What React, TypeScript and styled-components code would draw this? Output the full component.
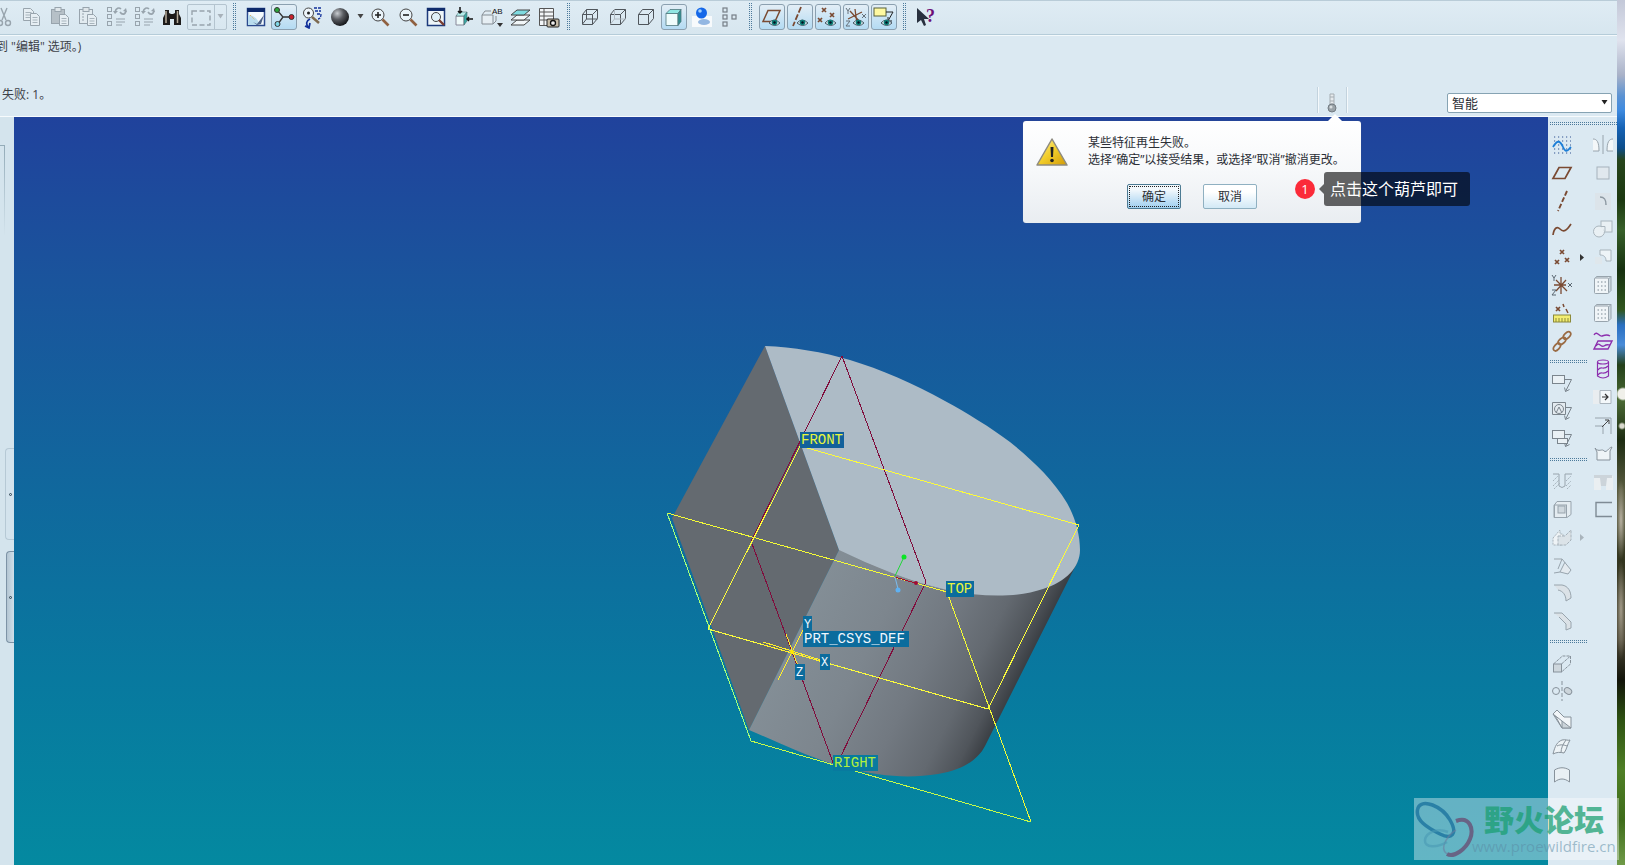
import React from "react";
import styled, { createGlobalStyle } from "styled-components";

const GlobalStyle = createGlobalStyle`
  * { box-sizing: border-box; }
  body {
    margin: 0;
    background: #dbe9f2;
    color: #2b2f36;
    font: 12px/17px "Open Sans", "Noto Sans CJK SC", sans-serif;
  }
  button, select { font: inherit; color: inherit; }
`;

/* ---------- frame ---------- */

const Desktop = styled.div`
  position: relative;
  display: flex;
  min-height: 100vh;
  overflow: hidden;
`;

const AppWindow = styled.div`
  flex: 1;
  min-width: 0;
  display: flex;
  flex-direction: column;
  background: #dbe9f2;
`;

const Wallpaper = styled.div`
  width: 8px;
  background:
    radial-gradient(circle at 6px 394px, #f0f0ea 0 5px, transparent 7px),
    radial-gradient(circle at 5px 426px, #d8d8cc 0 2px, transparent 4px),
    radial-gradient(ellipse 5px 40px at 4px 520px, #b9b2a2, transparent),
    radial-gradient(ellipse 5px 50px at 4px 610px, #a49c8a, transparent),
    linear-gradient(#c3c8d8 0, #e0e3ee 40px, #a9b2c8 75px, #5b92d2 96px, #3f8be0 110px,
      #1662b4 128px, #0d4d8a 148px, #27451c 160px, #1c3811 200px, #38602a 230px, #16300f 270px,
      #31561f 310px, #2a6fc0 325px, #4a8cd8 345px, #24401a 365px, #4b6a35 400px, #1d2c12 440px,
      #5a5c40 490px, #33351f 560px, #4a4534 640px, #12140a 680px, #2e5212 720px, #4f7f26 770px,
      #3e6c1a 820px, #6f9a48 865px);
`;

const Toolbar = styled.header`
  display: flex;
  align-items: center;
  height: 35px;
  padding-bottom: 2px;
  overflow: hidden;
  border-top: 1px solid #b9ccd8;
  border-bottom: 1px solid #b5ccd9;
  background: linear-gradient(#dfecf4, #d7e6ef);
`;

const ToolGroup = styled.div<{ $clipped?: boolean }>`
  display: flex;
  align-items: center;
  flex: none;
  margin-left: ${(p) => (p.$clipped ? "-10px" : "0")};
`;

const Grip = styled.span<{ $vertical?: boolean; $length: number }>`
  flex: none;
  width: ${(p) => (p.$vertical ? "14px" : `${p.$length}px`)};
  height: ${(p) => (p.$vertical ? `${p.$length}px` : "14px")};
  padding: ${(p) => (p.$vertical ? "0 6px 0 4px" : "5px 0 5px 1px")};
  background-image: conic-gradient(#4c7a9b 25%, transparent 0);
  background-size: 2px 2px;
  background-clip: content-box;
  background-origin: content-box;
`;

const ToolButton = styled.button<{ $on?: boolean }>`
  display: grid;
  place-items: center;
  flex: none;
  width: 26px;
  height: 26px;
  margin: 1px;
  padding: 0;
  border: 1px solid ${(p) => (p.$on ? "#8ba0b0" : "transparent")};
  border-radius: 3px;
  background: ${(p) => (p.$on ? "linear-gradient(#e3eef6, #b4dbf3)" : "none")};
`;

const ArrowButton = styled.button`
  display: grid;
  place-items: center;
  width: 12px;
  height: 26px;
  padding: 0;
  border: 0;
  background: none;
`;

const SplitBox = styled.div`
  display: flex;
  width: 40px;
  height: 26px;
  margin: 0 1px;
  border: 1px solid #b4c4cf;
  border-radius: 2px;

  > button:first-child { width: 26px; height: 24px; margin: 0; }
  > button:last-child { height: 24px; border-left: 1px solid #b4c4cf; }
`;

const MessageBar = styled.section`
  display: flex;
  justify-content: space-between;
  height: 82px;
  border-top: 1px solid #f3f9fc;
  border-bottom: 1px solid #f7fbfd;
`;

const Messages = styled.div`
  display: flex;
  flex-direction: column;
  gap: 31px;
  padding: 2px 0 0 2px;
  white-space: nowrap;
  color: #3d4148;

  p { margin: 0; }
  p:first-child { margin-left: -6px; }
`;

const StatusTools = styled.div`
  display: flex;
  align-items: flex-end;
  gap: 100px;
  padding: 0 5px 3px 0;
`;

const StatusSlot = styled.div`
  position: relative;
  width: 30px;
  height: 26px;
  border-left: 1px solid #c3d3de;
  border-right: 1px solid #c3d3de;
  box-shadow: inset 1px 0 #f4f9fc, 1px 0 #f4f9fc;
`;

const StatusButton = styled.button`
  display: flex;
  align-items: flex-end;
  justify-content: center;
  width: 28px;
  height: 26px;
  padding: 0;
  border: 0;
  background: none;
`;

const FilterBox = styled.div`
  position: relative;
  width: 165px;
  height: 20px;

  select {
    width: 100%;
    height: 20px;
    padding: 0 4px;
    appearance: none;
    border: 1px solid #86a3b3;
    border-radius: 2px;
    background: #fff;
    font-size: 13px;
    line-height: 18px;
  }
  svg {
    position: absolute;
    right: 4px;
    top: 7px;
  }
`;

/* ---------- notification ---------- */

const Balloon = styled.div`
  position: absolute;
  z-index: 2;
  top: 34px;
  right: -15px;
  width: 338px;
  height: 102px;
  display: grid;
  grid-template-columns: 65px 1fr;
  align-content: start;
  padding-top: 13px;
  border-radius: 3px;
  background: linear-gradient(#fff, #f6f8fa 50%, #e9edf1);
  box-shadow: 0 0 1px #5b6b88;

  &::before {
    content: "";
    position: absolute;
    top: -7px;
    right: 18px;
    border: 8px solid transparent;
    border-top: 0;
    border-bottom-color: #fff;
  }
  > svg { margin: 3px 0 0 12px; }
  p { margin: 0; white-space: nowrap; }
`;

const BalloonActions = styled.div`
  grid-column: 1 / -1;
  display: flex;
  gap: 22px;
  padding: 16px 0 0 104px;
`;

const BalloonButton = styled.button<{ $primary?: boolean }>`
  width: 54px;
  height: 25px;
  padding: 0;
  border: 1px solid ${(p) => (p.$primary ? "#4d7b93" : "#8fb0c1")};
  border-radius: 2px;
  background: ${(p) => (p.$primary ? "linear-gradient(#f2f8fc 20%, #9fcff0)" : "linear-gradient(#fff 30%, #d2e9f6)")};
  outline: ${(p) => (p.$primary ? "1px dotted #222" : "none")};
  outline-offset: -3px;
`;

const Annotation = styled.div`
  position: absolute;
  z-index: 3;
  left: 272px;
  top: 51px;
  display: flex;
  align-items: center;
  gap: 4px;
  white-space: nowrap;
`;

const Step = styled.span`
  width: 20px;
  height: 20px;
  border-radius: 50%;
  background: #fb2b39;
  color: #fff;
  text-align: center;
  font-size: 13px;
  line-height: 20px;
`;

const Hint = styled.span`
  display: flex;
  align-items: center;
  color: #fff;
  font-size: 16px;
  line-height: 24px;

  &::before {
    content: "";
    border: 5px solid transparent;
    border-left: 0;
    border-right-color: rgba(0, 0, 0, 0.6);
  }
  b {
    width: 146px;
    padding: 5px 6px;
    border-radius: 3px;
    background: rgba(0, 0, 0, 0.6);
    font-weight: 400;
  }
`;

/* ---------- work area ---------- */

const WorkArea = styled.main`
  flex: 1;
  display: flex;
  min-height: 0;
`;

const Rail = styled.aside`
  width: 14px;
  flex: none;
  padding-top: 28px;
  display: flex;
  flex-direction: column;
  align-items: flex-end;
  background: #d4e4ed;
`;

const RailEdge = styled.span`
  align-self: flex-start;
  width: 5px;
  height: 303px;
  border-top: 1px solid #93abb8;
  border-right: 1px solid;
  border-image: linear-gradient(#93abb8, transparent 30%) 1;
`;

const RailTab = styled.button<{ $front?: boolean }>`
  width: ${(p) => (p.$front ? "8px" : "9px")};
  height: 92px;
  margin-bottom: 11px;
  padding: 0;
  display: grid;
  place-items: center;
  border: ${(p) => (p.$front ? "1px solid #7d93a6" : "1px solid #b6c9d5")};
  border-right: 0;
  border-radius: 4px 0 0 4px;
  background: ${(p) => (p.$front ? "linear-gradient(90deg, #b3c5d2, #cfdfea)" : "#d3e3ed")};

  i {
    width: 3px;
    height: 3px;
    border: 1px solid #2c4250;
    border-radius: 50%;
  }
`;

const Viewport = styled.div`
  flex: 1;
  min-width: 0;
  background: linear-gradient(#20429c 0%, #1a549c 22%, #10689d 50%, #08799f 75%, #0489a0 100%);

  svg { display: block; width: 100%; height: 748px; }
`;

const Palette = styled.aside`
  flex: none;
  width: 69px;
  display: flex;
  flex-wrap: wrap;
  align-content: flex-start;
  background: #dbe9f2;
`;

const PaletteColumn = styled.div<{ $width: number }>`
  width: ${(p) => p.$width}px;
  display: flex;
  flex-direction: column;
`;

const PaletteRow = styled.div`
  display: flex;
  align-items: center;
  height: 28px;
`;

/* ---------- forum watermark ---------- */

const Watermark = styled.div`
  position: absolute;
  z-index: 4;
  right: 6px;
  bottom: 5px;
  display: flex;
  width: 205px;
  height: 62px;
  background: rgba(255, 255, 255, 0.38);

  div { padding-top: 2px; margin-left: -2px; white-space: nowrap; }
  strong {
    display: block;
    padding-left: 12px;
    color: rgba(24, 158, 112, 0.72);
    font: 900 30px/36px "Noto Sans CJK SC", sans-serif;
  }
  small {
    display: block;
    color: rgba(90, 140, 165, 0.55);
    font: 15px/20px "Open Sans", sans-serif;
  }
`;

/* ---------- icons ---------- */

const G = "#98a4ad";
const D = "#50565c";
const B = "#7a4a32";
const P = "#8c2fae";

const eye = (
  <g>
    <path d="M9 18q5-6 11 0q-5 5-11 0z" fill="#dfeaf0" stroke="#4a5a66" />
    <circle cx="14.500" cy="17.500" r="2.800" fill="#0f7f78" />
    <circle cx="14.500" cy="17.500" r="1.200" fill="#012" />
  </g>
);
const page = (x: number, y: number, w: number, h: number) => (
  <g>
    <path d={`M${x} ${y}h${w - 3}l3 3v${h - 3}h-${w}z`} fill="#e6eef3" stroke={G} />
    <path d={`M${x + 2} ${y + 4}h${w - 4}m0 2.500h-${w - 4}m0 2.500h${w - 4}`} stroke={G} strokeWidth=".8" />
  </g>
);
const clipboard = (
  <g>
    <rect x="3.500" y="4.500" width="13" height="14" fill="#b6c0c7" stroke={G} />
    <rect x="7" y="2.500" width="6" height="4" fill="#dfe6ea" stroke={G} />
  </g>
);
const lens = (
  <g>
    <circle cx="10" cy="10" r="6" fill="#eaf4fa" stroke="#444" />
    <path d="M14.500 14.500l6 6" stroke="#8f6040" strokeWidth="2.600" />
  </g>
);
const tree = (
  <g stroke={G}>
    <rect x="3.500" y="2.500" width="4" height="4" />
    <rect x="3.500" y="9.500" width="4" height="4" />
    <rect x="3.500" y="16.500" width="4" height="4" />
    <path d="M12 14h9m0 3h-9m0 3h6" />
    <path d="M11 7c1-4 4-5 6-3m5 2c-1 4-4 4-6 1" strokeWidth="1.600" />
    <path d="M9 6l2 3 3-3zM19 6l3-3 1 4z" fill={G} stroke="none" />
  </g>
);
const boxEdges = (
  <path d="M4.500 9.500h10v10h-10zM4.500 9.500l4-5h11v9l-5 6M14.500 9.500l5-5" />
);
const solidBox = (
  <g>
    <path d="M6.500 3.500h13.500v14l-3 3" fill="#cdd9e1" stroke={G} />
    <path d="M3.500 6.500l2-3h14.500l-3 3z" fill="#dfe8ee" stroke={G} />
    <rect x="3.500" y="5" width="14" height="15.500" rx="1" fill="#f0f5f8" stroke={G} />
    <path d="M6.500 9h9m-9 4h9m-9 4h9" stroke="#a3aeb6" strokeWidth="1.500" strokeDasharray="1.500 2" />
  </g>
);
const cross = (x: number, y: number) => <path d={`M${x - 2} ${y - 2}l4 4m0-4l-4 4`} strokeWidth="1.700" />;
const callout = (x: number, y: number) => (
  <g stroke="#7b858d">
    <rect x={x} y={y} width="12" height="8" fill="#eaf1f5" />
    <path d={`M${x + 12} ${y + 4}h7l-6 12m-1-4l1 4 4-2`} />
  </g>
);

const icons: Record<string, React.ReactNode> = {
  cut: <g stroke={G} strokeWidth="1.400"><path d="M15 3l-5 12M9 3l5 12" /><circle cx="8" cy="18" r="2.500" /><circle cx="16" cy="18" r="2.500" /></g>,
  copy: <g>{page(3.5, 3.5, 10, 12)}{page(10.5, 8.5, 9, 12)}</g>,
  paste: <g>{clipboard}{page(11.5, 9.5, 9, 11)}</g>,
  pasteSpecial: <g><rect x="3.500" y="4.500" width="13" height="14" fill="#e2ebf0" stroke={G} /><rect x="7" y="2.500" width="6" height="4" fill="#dfe6ea" stroke={G} /><path d="M6 9h2m-2 3h2m-2 3h2" stroke={G} />{page(11.5, 9.5, 9, 11)}</g>,
  regen: tree,
  find: <g fill="#1d1b1a"><path d="M5 5h4v3l2 1h2l2-1v-3h4v4l2 4v7h-7v-6h-4v6h-7v-7l2-4z" /><path d="M6 6v12M17.500 6v12" stroke="#b8ad9c" strokeWidth="1.500" /></g>,
  area: <rect x="3" y="5" width="18" height="14" stroke={G} strokeWidth="1.400" strokeDasharray="5 2.500" />,
  repaint: <g><rect x="3.500" y="3.500" width="17" height="17" fill="#f3fafd" stroke="#2c4a8e" strokeWidth="1.500" /><rect x="3" y="3" width="18" height="4" fill="#0d2a6b" /><path d="M4 20v-10c5 0 11 4 11 10z" fill="#b9dcee" /><path d="M9 17l4 2 7-9-3 9-4 1z" fill="#4d6186" /><path d="M6 10l5 5" stroke="#e7a22d" strokeDasharray="1 1.500" /></g>,
  spin: <g stroke="#333"><path d="M5 5l6 7-5 7M11 12h9" strokeWidth="1.300" /><circle cx="5" cy="5" r="2.500" fill="#2ba63a" /><circle cx="5.500" cy="19" r="2.500" fill="#7ed6e6" /><circle cx="19.500" cy="12" r="2.500" fill="#c8202c" /></g>,
  orientMode: <g><circle cx="8.500" cy="8" r="5" fill="#eef5fa" stroke="#444" /><circle cx="8.500" cy="8" r="1.500" fill="#222" /><path d="M12 12l7 6" stroke="#7d6a50" strokeWidth="2.500" /><path d="M14 3h7m-6 3h6m-4 3h4c0 3-1 5-3 5" stroke="#12309a" strokeWidth="1.300" strokeDasharray="3 1" /><path d="M10 14c-4 2-4 5-2 8m-3-1l4 2 1-5" stroke="#12309a" strokeWidth="1.700" /></g>,
  sphere: <circle cx="12" cy="12" r="9" fill="url(#ball)" />,
  zoomIn: <g>{lens}<path d="M7 10h6m-3-3v6" stroke="#222" strokeWidth="1.600" /></g>,
  zoomOut: <g>{lens}<path d="M7 10h6" stroke="#222" strokeWidth="1.600" /></g>,
  refit: <g><rect x="3.500" y="3.500" width="17" height="17" fill="#eef6fa" stroke="#1d3a7c" strokeWidth="1.500" /><path d="M3 4.500h18" stroke="#102c6c" strokeWidth="3" /><circle cx="12" cy="12" r="4.500" fill="#dff0f8" stroke="#444" /><path d="M15 15l5 5" stroke="#7a3c30" strokeWidth="2.400" /></g>,
  orient: <g><path d="M4 11h8v9h-8z" fill="#eefafa" stroke="#889" /><path d="M4 11l3-4h8l-3 4z" fill="#b5eceb" stroke="#4b6c70" strokeWidth=".6" /><path d="M12 11l3-4v9l-3 4z" fill="#37a9a4" stroke="#4b6c70" strokeWidth=".6" /><path d="M8 2v6m-2-2l2 2 2-2M21 14h-6m2-2l-2 2 2 2" stroke="#111" strokeWidth="1.500" /></g>,
  namedView: <g><path d="M2 10h11v9h-11zM2 10l3-4h6M13 19l3-3v-5" fill="#e6eef3" stroke="#858d94" /><text x="12" y="9" fontSize="8" fill="#111" fontFamily="Liberation Sans">AB</text><path d="M17 18h6l-3 4z" fill="#333" /></g>,
  layers: <g stroke="#444" fill="#f2f7f9"><path d="M3 20l6-5h13l-6 5z" /><path d="M3 15l6-5h13l-6 5z" /><path d="M3 10l6-5h13l-6 5z" fill="#7fdbe0" /></g>,
  viewManager: <g><path d="M3.500 3.500h14v17h-14zM3.500 7h14m0 4h-14m0 4h14M8 3v17" stroke="#555" fill="#f4f7f9" /><rect x="11" y="14" width="12" height="8" rx="1" fill="#c7bda9" stroke="#222" /><circle cx="17" cy="18" r="2.500" fill="#eee" stroke="#111" strokeWidth="1.300" /></g>,
  wire: <g stroke={D}>{boxEdges}<path d="M8.500 4.500v9.500h11m-11 0l-4 5" /></g>,
  hiddenLine: <g stroke={D}>{boxEdges}<path d="M8.500 4.500v9.500h11m-11 0l-4 5" stroke="#b2bcc4" /></g>,
  noHidden: <g stroke={D}>{boxEdges}</g>,
  shaded: <g stroke="#50797f" strokeWidth=".8"><path d="M4 8.500h12v12h-12z" fill="#effcfc" /><path d="M4 8.500l4-4h11l-3 4z" fill="#8fe6e2" /><path d="M16 8.500l3-4v12l-3 4z" fill="#2e8f90" /></g>,
  render: <g><rect x="2" y="11" width="20" height="11" fill="#f7fafc" /><ellipse cx="14" cy="17" rx="6" ry="3" fill="#93b7e2" /><circle cx="11.500" cy="8" r="5.500" fill="#1467e8" /><circle cx="10" cy="6" r="1.800" fill="#9fd0ff" /></g>,
  modelTree: <g stroke="#767e86" strokeWidth="1.200"><rect x="5" y="3" width="4" height="4" /><rect x="5" y="10" width="4" height="4" /><rect x="5" y="17" width="4" height="4" /><rect x="14" y="10" width="4" height="4" /></g>,
  planeOn: <g><path d="M8 5.500h12l-5 11h-12z" stroke={B} strokeWidth="1.500" />{eye}</g>,
  axisOn: <g><path d="M13 2l-8 19" stroke={B} strokeWidth="1.800" strokeDasharray="6 2" />{eye}</g>,
  pointOn: <g><g stroke={B}>{cross(8, 5)}{cross(16, 10)}{cross(4, 15)}</g>{eye}</g>,
  csysOn: <g><path d="M11 4l2 15M4 14l14-7M6 6l10 11" stroke={B} strokeWidth="1.300" /><path d="M2 3l2 3 2-3m-2 3v3M18 9l4 4m0-4l-4 4M2 16h4l-4 5h4" stroke="#66717a" />{eye}</g>,
  tagOn: <g><rect x="2" y="3" width="12" height="8" fill="#fff9a0" stroke="#59603a" /><path d="M14 7h7l-5 9m0-4v4h4" stroke="#222" />{eye}</g>,
  help: <g><path d="M3 3v15l4-3 3 6 2-1-2-6h5z" fill="#28303e" /><text x="12" y="17" fontSize="18" fontWeight="bold" fill="#6d0f78" fontFamily="Liberation Serif">?</text></g>,

  sketch: <g><path d="M4 4h17M4 8h17M4 12h17M4 16h17M4 20h17" stroke="#31528f" strokeWidth="1.200" strokeDasharray="1.200 2.800" /><path d="M3 14c4-7 7-7 10 0s5 3 8 0" stroke="#1c7fd8" strokeWidth="1.800" /></g>,
  plane: <path d="M9 6.500h12l-6 11h-12z" stroke={B} strokeWidth="1.700" />,
  axis: <path d="M17 2l-9 20" stroke={B} strokeWidth="1.900" strokeDasharray="5 2" />,
  curve: <path d="M3 18c1-7 4-9 7-6 4 4 7 1 11-5" stroke={B} strokeWidth="1.700" />,
  points: <g stroke={B}>{cross(12, 7)}{cross(7, 17)}{cross(17, 15)}</g>,
  csys: <g><path d="M11 4v17M6 7l11 11M4 12h12M16 7l-10 11" stroke={B} strokeWidth="1.300" /><path d="M2 2l2 3 2-3m-2 3v3M18 10l4 4m0-4l-4 4M2 17h4l-4 5h4" stroke="#5b6771" /></g>,
  measure: <g><g stroke={B}>{cross(8, 8)}<path d="M13 3l1 3m2 2l2 4" strokeWidth="1.500" /></g><rect x="3.500" y="14" width="17" height="7" fill="#f3ee72" stroke="#8c8a3a" /><path d="M6 21v-4m3 4v-4m3 4v-4m3 4v-4m3 4v-4" stroke="#8c8a3a" /></g>,
  chain: <g stroke="#9a6b44" strokeWidth="1.700"><ellipse cx="7" cy="18" rx="4.500" ry="2.600" transform="rotate(-50 7 18)" /><ellipse cx="12" cy="12" rx="4.500" ry="2.600" transform="rotate(-40 12 12)" /><ellipse cx="17" cy="6.500" rx="4.500" ry="2.600" transform="rotate(-45 17 6.500)" /></g>,
  note: callout(2.5, 4.5),
  balloonNote: <g>{callout(2.5, 4.5)}<path d="M2.500 3.500h13v12h-13z" stroke="#7b858d" fill="#e4ebf0" /><circle cx="9" cy="10" r="4.500" stroke="#7b858d" /><path d="M6 14l3-6 3 6" stroke="#7b858d" /></g>,
  stackedNote: <g>{callout(2.5, 3.5)}<rect x="7.500" y="11.500" width="10" height="5" fill="#eaf1f5" stroke="#7b858d" /></g>,
  hole: <g stroke={G}><path d="M3 5h6v12q3 3 6 0v-12h7" /><path d="M3 12l5-5M3 17l6-6M4 20l6-6M16 12l5-5M16 17l5-5M17 20l4-4" strokeWidth=".8" strokeDasharray="2 1" /></g>,
  shell: <g stroke={G}><path d="M7 4.500h14v13l-4 3h-13v-12z" fill="#e4ecf1" /><rect x="4.500" y="8" width="12" height="12.500" /><rect x="8" y="9" width="7" height="7" fill="#cfd8de" /></g>,
  rib: <g stroke="#a8b3bb"><path d="M3 13l7-8v4h3v11h-10z" fill="#eef3f6" strokeDasharray="2 1" /><path d="M8 11h7l6-6v10l-5 5h-8z" fill="#dbe3e8" strokeDasharray="3 1" /></g>,
  draft: <g stroke={G}><path d="M4 6h8l9 11-3 4-8-2 5-10" fill="#e3eaef" /><path d="M10 19l-6 1M12 6l-4 10" /></g>,
  round: <g><path d="M4 4h8c6 1 9 6 9 13l-5 3c0-6-3-10-8-11z" fill="#dbe2e7" /><path d="M4 4h8c6 1 9 6 9 13l-5 3c0-6-3-10-8-11" stroke={G} /></g>,
  chamfer: <g><path d="M4 4h8l9 9v6l-5 2v-6l-7-7z" fill="#dbe2e7" /><path d="M4 4h8l9 9v6l-5 2v-6l-7-7M12 4l9 9" stroke={G} /></g>,
  extrude: <g stroke="#87929b"><rect x="3.500" y="13" width="8" height="8" fill="#ced7dd" /><path d="M3.500 13l9-8h8v8l-9 8M11.500 13l9-8" strokeDasharray="3 1" /></g>,
  revolve: <g stroke="#87929b"><path d="M12 2v20" strokeDasharray="4 2" /><circle cx="6" cy="12" r="3.500" /><ellipse cx="18" cy="12" rx="4" ry="3" fill="#ccd5db" transform="rotate(35 18 12)" /></g>,
  sweep: <g stroke="#87929b"><path d="M3 7l4-4 7 7h7v11h-9z" fill="#f1f5f8" /><path d="M3 7l9 7v7h9l-9-7" fill="#cbd4da" /><path d="M3 7l3 3 6 11" /></g>,
  blend: <g stroke="#87929b" fill="#edf3f6"><path d="M3 19c2-8 4-12 9-14 4-1 6 1 8 0-3 5-3 9-6 13-4-1-7-1-11 1z" /><path d="M7 11c4-2 7-1 10 0M11 18c0-5 2-9 5-13" /></g>,
  surface: <path d="M4.500 19v-12c5-3 10-3 15 0v12c-5-4-10-4-15 0z" fill="#e9f0f4" stroke="#87929b" />,

  mirror: <g stroke={G}><path d="M12 2v19" /><path d="M2 6c4 0 6 3 6 12h-6M22 6c-4 0-6 3-6 12h6" fill="#f3f7f9" /></g>,
  square: <rect x="6" y="6" width="12" height="12" fill="#e0e8ee" stroke="#a6b2bb" />,
  arc: <g><rect x="4" y="4" width="16" height="17" fill="#dce4ea" /><path d="M9 8c5 0 6 3 6 8" stroke="#8d98a1" strokeWidth="1.500" /></g>,
  merge: <g stroke="#aab6be" fill="#e9f0f4"><rect x="10" y="4" width="11" height="11" /><circle cx="8" cy="14.500" r="5.500" /><path d="M10 9.500h4v5" /></g>,
  trim: <g><path d="M9 5h11v11h-5c0-4-2-6-6-6z" fill="#eef4f7" stroke="#a7b3bb" /><path d="M4 12h7v7h-7z" fill="#dfe7ec" /></g>,
  pattern: solidBox,
  offset: <g stroke={P} strokeWidth="1.400"><path d="M7 12h14l-4 8h-14z" /><path d="M3 6c3-5 5 2 8 1s5-2 8 0M5 17c3-5 5 2 8 0s4-1 6-1" /></g>,
  wrap: <g stroke={P} strokeWidth="1.200"><ellipse cx="12" cy="5" rx="5.500" ry="2" /><path d="M6.500 5v14q5.500 4 11 0v-14M7 13c3-5 5 1 10-4M7 18c3-5 5 1 10-4" /></g>,
  move: <g><path d="M2 5h7v14h-7z" fill="#e9edf0" /><path d="M9 5.500h11v13h-11z" fill="#f3f8fa" stroke="#aab5bd" /><path d="M11 12h6m-3-3l3 3-3 3" stroke="#333" strokeWidth="1.200" /></g>,
  extend: <g stroke={G}><path d="M4 5h16v16M4 13h8v8" /><path d="M11 14l7-7m-4 0h4v4" stroke="#444" /></g>,
  fill: <path d="M4 7c4 5 7 0 9 3 3 2 4-3 8-4l-2 4v9h-13v-8z" fill="#eef4f7" stroke="#87929b" />,
  thicken: <g fill="#eaeff2"><path d="M3 7h7v14h-7zM15 7h7v14h-7z" /><path d="M3 6h18v3h-5l-1 8h-5l-1-8h-6z" fill="#ccd4da" /></g>,
  bracket: <path d="M21 5.500h-16v14h16" stroke="#7f8b95" strokeWidth="1.400" />,
};

const Icon = ({ name }: { name: string }) => (
  <svg width="24" height="24" viewBox="0 0 24 24" fill="none" aria-hidden="true">
    {icons[name]}
  </svg>
);

const Tool = ({ name, on }: { name: string; on?: boolean }) => (
  <ToolButton type="button" aria-label={name} aria-pressed={on} $on={on}>
    <Icon name={name} />
  </ToolButton>
);

const Triangle = ({ color = "#444" }: { color?: string }) => (
  <svg width="7" height="5" viewBox="0 0 7 5" aria-hidden="true">
    <path d="M.5 0h6l-3 4.500z" fill={color} />
  </svg>
);

/* ---------- model ---------- */

const SceneLabel = ({ x, y, w, h = 16, text, color, back = "#0b6c9d" }: {
  x: number; y: number; w: number; h?: number; text: string; color: string; back?: string;
}) => (
  <g>
    <rect x={x} y={y} width={w} height={h} fill={back} />
    <text
      x={x + 1}
      y={y + h - 4}
      fill={color}
      fontFamily="Liberation Mono"
      fontSize={text.length > 1 ? 14 : 12}
    >
      {text}
    </text>
  </g>
);

const Model = () => (
  <svg viewBox="14 117 1534 748" fill="none" role="img" aria-label="model">
    <defs>
      <linearGradient id="side" gradientUnits="userSpaceOnUse" x1="775" y1="650" x2="984" y2="754">
        <stop offset="0" stopColor="#848f97" />
        <stop offset=".35" stopColor="#7d868e" />
        <stop offset=".6" stopColor="#727981" />
        <stop offset=".8" stopColor="#636970" />
        <stop offset=".92" stopColor="#50555b" />
        <stop offset="1" stopColor="#383c41" />
      </linearGradient>
    </defs>
    <path d="M765 346L672 518 749 730 839 550z" fill="#646a70" />
    <path
      d="M839 550L749 730C785 745 812 759 847 768 880 776 907 779 938 774 962 770 978 760 985 746L1077 563 1000 520z"
      fill="url(#side)"
    />
    <path
      d="M765 346C793 347 823 352 850 360 880 369 915 384 945 401 967 413 990 427 1010 442 1031 459 1053 479 1067 503 1075 517 1080 534 1080 550 1080 567 1066 582 1043 589 1020 597 985 598 947 590 910 582 873 566 839 550z"
      fill="#adbbc6"
    />
    <path d="M839 550Q880 571 920 583L947 590 902 580z" fill="#858a8e" />
    <g strokeWidth="1" shapeRendering="crispEdges">
      <path d="M842 356L926 582 835 768 751 541z" stroke="#800c3c" />
      <path d="M800 446L1079 525 988 709 708 629z" stroke="#fbfb3c" />
      <path d="M667 513L947 592 1031 822" stroke="#f4fb36" />
      <path d="M1031 822L751 741" stroke="#c5fa4a" />
      <path d="M667 513L751 741" stroke="#a4ff7a" />
      <path d="M763 642l61 19M764 645l59 17M778 680l29-58M786 634l15 40" stroke="#ffef2a" />
      <path d="M895 577l20 6" stroke="#a1102c" />
    </g>
    <path d="M895 576l9-19" stroke="#20d838" />
    <path d="M895 577l3 12" stroke="#7bbdf0" />
    <circle cx="792" cy="652" r="2" fill="#ffe800" />
    <circle cx="904" cy="557" r="2.500" fill="#0ce526" />
    <circle cx="898" cy="590" r="2.500" fill="#5fb1f2" />
    <circle cx="916" cy="583" r="2" fill="#a00a34" />
    <SceneLabel x={800} y={432} w={44} text="FRONT" color="#e8f53c" back="#12619b" />
    <SceneLabel x={946} y={581} w={28} text="TOP" color="#e8f53c" />
    <SceneLabel x={833} y={755} w={45} text="RIGHT" color="#b4f03c" back="#087a9f" />
    <SceneLabel x={803} y={616} w={9} text="Y" color="#f0f8ff" />
    <SceneLabel x={803} y={631} w={106} text="PRT_CSYS_DEF" color="#f0f8ff" />
    <SceneLabel x={820} y={654} w={10} text="X" color="#f0f8ff" />
    <SceneLabel x={795} y={664} w={10} text="Z" color="#f0f8ff" />
  </svg>
);

const leftColumn = [
  ["sketch", "plane", "axis", "curve", "points", "csys", "measure", "chain"],
  ["note", "balloonNote", "stackedNote"],
  ["hole", "shell", "rib", "draft", "round", "chamfer"],
  ["extrude", "revolve", "sweep", "blend", "surface"],
];
const rightColumn = [
  "mirror", "square", "arc", "merge", "trim", "pattern", "pattern", "offset",
  "wrap", "move", "extend", "fill", "thicken", "bracket",
];
const flyouts: Record<string, string> = { points: "#333", rib: "#a9b4bc" };

export default function App() {
  return (
    <Desktop>
      <GlobalStyle />
      <AppWindow>
        <Toolbar>
          <svg width="0" height="0" aria-hidden="true">
            <radialGradient id="ball" cx=".35" cy=".3" r=".75">
              <stop offset="0" stopColor="#c8ccd0" />
              <stop offset=".45" stopColor="#5a5d62" />
              <stop offset="1" stopColor="#101114" />
            </radialGradient>
          </svg>
          <ToolGroup $clipped>
            {["cut", "copy", "paste", "pasteSpecial", "regen", "regen", "find"].map((n, i) => <Tool key={i} name={n} />)}
            <SplitBox>
              <Tool name="area" />
              <ArrowButton type="button" aria-label="area options"><Triangle color="#a7b1b9" /></ArrowButton>
            </SplitBox>
          </ToolGroup>
          <Grip $vertical $length={27} />
          <ToolGroup>
            <Tool name="repaint" />
            <Tool name="spin" on />
            <Tool name="orientMode" />
            <Tool name="sphere" />
            <ArrowButton type="button" aria-label="appearance"><Triangle /></ArrowButton>
            {["zoomIn", "zoomOut", "refit", "orient", "namedView", "layers", "viewManager"].map((n) => <Tool key={n} name={n} />)}
          </ToolGroup>
          <Grip $vertical $length={27} />
          <ToolGroup>
            {["wire", "hiddenLine", "noHidden", "shaded", "render", "modelTree"].map((n) => <Tool key={n} name={n} on={n === "shaded"} />)}
          </ToolGroup>
          <Grip $vertical $length={27} />
          <ToolGroup>
            {["planeOn", "axisOn", "pointOn", "csysOn", "tagOn"].map((n) => <Tool key={n} name={n} on />)}
          </ToolGroup>
          <Grip $vertical $length={27} />
          <ToolGroup><Tool name="help" /></ToolGroup>
        </Toolbar>

        <MessageBar>
          <Messages>
            <p>到 "编辑" 选项。)</p>
            <p>失败: 1。</p>
          </Messages>
          <StatusTools>
            <StatusSlot>
              <StatusButton type="button" aria-label="regeneration status">
                <svg width="12" height="20" viewBox="0 0 12 20" fill="none">
                  <path d="M4 1h4v10h-4zM4 4h4M4 8h4" fill="#e6eaed" stroke="#a5adb3" />
                  <circle cx="6" cy="15" r="4" fill="#9aa3a9" stroke="#727b82" />
                  <circle cx="5" cy="14" r="1.500" fill="#d9dee1" />
                </svg>
              </StatusButton>
              <Balloon role="alertdialog">
                <svg width="34" height="30" viewBox="0 0 34 30">
                  <defs>
                    <linearGradient id="warn" x1="0" y1="0" x2="1" y2="1">
                      <stop offset="0" stopColor="#fff3a0" />
                      <stop offset=".5" stopColor="#f2cd2a" />
                      <stop offset="1" stopColor="#d19a08" />
                    </linearGradient>
                  </defs>
                  <path d="M17 2L32 28H2z" fill="url(#warn)" stroke="#8e8b80" strokeWidth="1.500" strokeLinejoin="round" />
                  <path d="M15.500 10h3l-.5 10h-2z" fill="#222" />
                  <circle cx="17" cy="23.500" r="1.800" fill="#222" />
                </svg>
                <div>
                  <p>某些特征再生失败。</p>
                  <p>选择“确定”以接受结果，或选择“取消”撤消更改。</p>
                </div>
                <BalloonActions>
                  <BalloonButton type="button" $primary>确定</BalloonButton>
                  <BalloonButton type="button">取消</BalloonButton>
                </BalloonActions>
                <Annotation>
                  <Step>1</Step>
                  <Hint><b>点击这个葫芦即可</b></Hint>
                </Annotation>
              </Balloon>
            </StatusSlot>
            <FilterBox>
              <select aria-label="filter" defaultValue="智能"><option>智能</option></select>
              <Triangle color="#222" />
            </FilterBox>
          </StatusTools>
        </MessageBar>

        <WorkArea>
          <Rail>
            <RailEdge />
            <RailTab type="button" aria-label="tree"><i /></RailTab>
            <RailTab type="button" aria-label="browser" $front><i /></RailTab>
          </Rail>
          <Viewport><Model /></Viewport>
          <Palette>
            <Grip $length={69} />
            <PaletteColumn $width={41}>
              {leftColumn.map((group, g) => (
                <React.Fragment key={g}>
                  {g > 0 && <Grip $length={40} />}
                  {group.map((n) => (
                    <PaletteRow key={n}>
                      <Tool name={n} />
                      {flyouts[n] && (
                        <svg width="10" height="7" viewBox="0 0 10 7" aria-hidden="true">
                          <path d="M4 0v7l4-3.500z" fill={flyouts[n]} />
                        </svg>
                      )}
                    </PaletteRow>
                  ))}
                </React.Fragment>
              ))}
            </PaletteColumn>
            <PaletteColumn $width={28}>
              {rightColumn.map((n, i) => <PaletteRow key={i}><Tool name={n} /></PaletteRow>)}
            </PaletteColumn>
          </Palette>
        </WorkArea>
      </AppWindow>
      <Wallpaper />
      <Watermark>
        <svg width="60" height="62" viewBox="0 0 60 62" fill="none">
          <path d="M4 10C8 0 28 8 36 22S38 42 26 36 0 22 4 10z" stroke="#176f9c" strokeWidth="3.500" opacity=".75" />
          <path d="M42 23c14-5 18 8 14 18S40 60 33 56" stroke="#6a4a70" strokeWidth="4" opacity=".75" />
          <path d="M33 56c-9-6 2-20 9-24" stroke="#6a7fa0" strokeWidth="1.500" opacity=".6" />
          <path d="M34 34c-10-4-22 0-23 8s12 8 22 2" stroke="#4a9ab4" strokeWidth="2.500" opacity=".6" />
        </svg>
        <div>
          <strong>野火论坛</strong>
          <small>www.proewildfire.cn</small>
        </div>
      </Watermark>
    </Desktop>
  );
}
